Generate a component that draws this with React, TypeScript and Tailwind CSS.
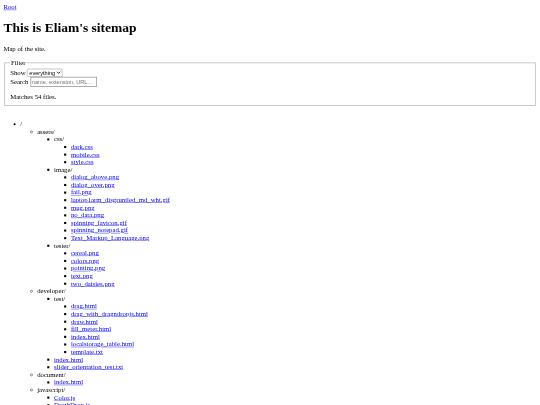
const link = "text-[#0000ee] underline";

function Links({ names }: { names: string[] }) {
  return (
    <>
      {names.map((name) => (
        <li key={name}>
          <a href="#" className={link}>{name}</a>
        </li>
      ))}
    </>
  );
}

function Files({ names }: { names: string[] }) {
  return (
    <ul className="list-[square] pl-10">
      <Links names={names} />
    </ul>
  );
}

function Folder({ name, children }: { name: string; children: React.ReactNode }) {
  return (
    <li>
      {name}/
      {children}
    </li>
  );
}

export default function App() {
  return (
    <div className="h-[405px] w-[540px] overflow-hidden bg-white">
      {/* page is laid out at 1280px and shrunk, like the capture */}
      <div className="w-[1280px] origin-top-left scale-[0.421875] p-2 font-['Liberation_Serif',serif] text-base leading-[18px] text-black blur-[0.8px]">
        <a href="#" className={link}>Root</a>
        <h1 className="my-[21.44px] text-[32px] leading-[37px] font-bold">This is Eliam's sitemap</h1>
        <p className="my-4">Map of the site.</p>
        <fieldset className="mx-[2px] border-2 border-[#c0c0c0] px-3 pt-[5.6px] pb-[10px]">
          <legend className="px-[2px]">Filter</legend>
          <div>
            Show{" "}
            <select className="rounded-[3px] border border-[#767676] bg-white font-['Liberation_Sans',sans-serif] text-[13.33px]">
              <option>everything</option>
            </select>
          </div>
          <div>
            Search{" "}
            <input
              placeholder="name, extension, URL..."
              className="w-[158px] border-2 border-[#a0a0a0] px-[2px] py-[1px] font-['Liberation_Sans',sans-serif] text-[13.33px] placeholder:text-[#757575]"
            />
          </div>
          <p className="mt-[15px] mb-0">Matches 54 files.</p>
        </fieldset>
        <ul className="my-[34px] list-disc pl-10">
          <Folder name="">
            <ul className="list-[circle] pl-10">
              <Folder name="assets">
                <ul className="list-[square] pl-10">
                  <Folder name="css">
                    <Files names={["dark.css", "mobile.css", "style.css"]} />
                  </Folder>
                  <Folder name="image">
                    <Files
                      names={[
                        "dialog_above.png",
                        "dialog_over.png",
                        "fail.png",
                        "laptop1arm_disgruntled_md_wht.gif",
                        "mug.png",
                        "no_data.png",
                        "spinning_favicon.gif",
                        "spinning_notepad.gif",
                        "Text_Markup_Language.png",
                      ]}
                    />
                  </Folder>
                  <Folder name="tester">
                    <Files names={["cereal.png", "colors.png", "pointing.png", "text.png", "two_daisies.png"]} />
                  </Folder>
                </ul>
              </Folder>
              <Folder name="developer">
                <ul className="list-[square] pl-10">
                  <Folder name="test">
                    <Files
                      names={[
                        "drag.html",
                        "drag_with_dragndropjs.html",
                        "draw.html",
                        "fill_meter.html",
                        "index.html",
                        "localstorage_table.html",
                        "template.txt",
                      ]}
                    />
                  </Folder>
                  <Links names={["index.html", "slider_orientation_test.txt"]} />
                </ul>
              </Folder>
              <Folder name="document">
                <ul className="list-[square] pl-10">
                  <Links names={["index.html"]} />
                </ul>
              </Folder>
              <Folder name="javascript">
                <ul className="list-[square] pl-10">
                  <Links names={["Color.js", "DeathDrop.js"]} />
                </ul>
              </Folder>
            </ul>
          </Folder>
        </ul>
      </div>
    </div>
  );
}
